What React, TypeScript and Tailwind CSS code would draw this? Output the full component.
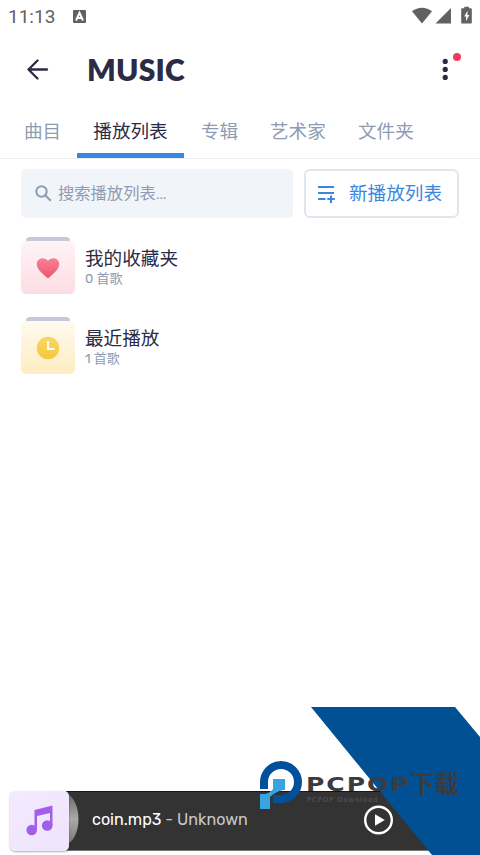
import type { ReactNode } from "react";
import clsx from "clsx";

const tabs = [
  { label: "曲目", className: "w-[53px]" },
  { label: "播放列表", className: "w-[107px]" },
  { label: "专辑", className: "w-[69px]" },
  { label: "艺术家", className: "w-[88px]" },
  { label: "文件夹", className: "w-[87px]" },
];

function StatusBar() {
  return (
    <div className="flex h-8 items-center px-2 text-[#616161]">
      <span className="w-[65px] pt-px font-[Roboto] text-[19px] leading-8">11:13</span>
      <svg width="13" height="13" viewBox="0 0 13 13">
        <rect width="13" height="13" rx="1" fill="#616161" />
        <path d="M3 10.5 6.5 2.8 10 10.5M4.4 8h4.2" fill="none" stroke="#fff" strokeWidth="2" />
      </svg>
      <svg width="60" height="20" viewBox="0 0 60 20" className="ml-auto" fill="#616161">
        <path d="M0 5.3C6 .6 14 .6 20 5.3L10 17.5Z" />
        <path d="M23.5 17.5H39V2Z" />
        <path d="M50 2.3h2.3V.8h4.6v1.5H59a.8.8 0 0 1 .8.8v13.6a.8.8 0 0 1-.8.8h-9a.8.8 0 0 1-.8-.8V3.1a.8.8 0 0 1 .8-.8Z" />
        <path d="m55.6 4.8-3.4 5.7h1.9v4.7l3.2-6.1h-1.9Z" fill="#fff" />
      </svg>
    </div>
  );
}

function Header() {
  return (
    <header className="flex h-[74px] items-center pl-[27px] text-[#2c2b45]">
      <svg
        width="22"
        height="22"
        viewBox="0 0 22 22"
        fill="none"
        stroke="currentColor"
        strokeWidth="2.3"
        strokeLinecap="round"
        strokeLinejoin="round"
      >
        <path d="M20 11.5H1.5M10.5 2.5l-9 9 9 9" />
      </svg>
      <h1 className="-mt-px ml-[38px] font-[Lato] text-[30px] font-extrabold leading-10 tracking-[0.2px]">
        MUSIC
      </h1>
      <div className="relative ml-auto mr-[32px]">
        <svg width="6" height="22" viewBox="0 0 6 22" fill="currentColor">
          <circle cx="3.2" cy="3.4" r="2.6" />
          <circle cx="3.2" cy="11.4" r="2.6" />
          <circle cx="3.2" cy="19.4" r="2.6" />
        </svg>
        <span className="absolute -top-[5px] left-[11px] size-2 rounded-full bg-[#f03d59]" />
      </div>
    </header>
  );
}

function Tabs() {
  return (
    <nav className="flex h-[53px] border-b border-[#eaecef] pl-[24px] text-[18.6px]">
      {tabs.map(({ label, className }, index) => (
        <div
          key={label}
          className={clsx(
            "flex flex-col whitespace-nowrap",
            className,
            index === 1 ? "items-center text-[#2c2b45]" : "text-[#8f9bb3]",
            index > 1 && "pl-[17px]"
          )}
        >
          <span className="h-[47px] leading-[53px]">{label}</span>
          {index === 1 && <span className="h-[5px] w-full bg-[#3b87e0]" />}
        </div>
      ))}
    </nav>
  );
}

function PlaylistRow({
  title,
  count,
  tone,
  children,
}: {
  title: string;
  count: string;
  tone: string;
  children: ReactNode;
}) {
  return (
    <li className="flex h-[80px]">
      <div className="w-[54px]">
        <div className="mx-auto h-[4px] w-[44px] rounded-t-[4px] bg-[#c5c9dc]" />
        <div className={clsx("flex h-[53px] items-center justify-center rounded-[5px] bg-linear-to-b", tone)}>
          {children}
        </div>
      </div>
      <div className="ml-[10px] pt-[8px]">
        <div className="text-[18.6px] leading-[28px] text-[#2c2b45]">{title}</div>
        <div className="-mt-px font-[Rubik,'Noto_Sans_CJK_SC',sans-serif] text-[13px] leading-[14px] text-[#8f9bb3]">
          {count}
        </div>
      </div>
    </li>
  );
}

function Player() {
  return (
    <footer className="mb-[4px] ml-[10px] mt-auto flex h-[61px] items-center">
      <div className="z-10 flex h-[60px] w-[59px] items-center justify-center rounded-[5px] bg-linear-to-br from-[#f5e9fd] to-[#ede5fe] shadow-[0_1px_2px_#00000050]">
        <svg width="27" height="31" viewBox="0 0 27 31" fill="#a25eea">
          <path d="M8.5 5 26.5 .5v20H24V8L11 11v14H8.5Z" />
          <circle cx="5.7" cy="25" r="5.3" />
          <circle cx="21.2" cy="20.5" r="5.3" />
        </svg>
      </div>
      <div className="-ml-[3px] flex h-[60px] flex-1 items-center border-b border-t border-b-[#777] border-t-[#161616] bg-[#333] font-[Rubik,Inter] text-white">
        <svg width="13" height="52" viewBox="0 0 13 52" className="-mt-1">
          <defs>
            <linearGradient id="disc" x2="0" y2="1">
              <stop stopColor="#666" />
              <stop offset=".5" stopColor="#aaa" />
              <stop offset="1" stopColor="#777" />
            </linearGradient>
          </defs>
          <path d="M0 0C7 3 12.5 13 12.5 26S7 49 0 52Z" fill="url(#disc)" />
        </svg>
        <span className="ml-[13px] w-[272px] whitespace-nowrap text-[16.1px]">
          coin.mp3 <span className="text-[#c8c8c8]">- Unknown</span>
        </span>
        <svg width="30" height="30" viewBox="0 0 30 30" className="-mt-px">
          <circle cx="14.5" cy="15" r="13.3" fill="none" stroke="#fff" strokeWidth="2.4" />
          <path d="M11 9.3v11.4l9.8-5.7Z" fill="#fff" />
        </svg>
      </div>
    </footer>
  );
}

function Watermark() {
  return (
    <div className="absolute bottom-0 right-0 z-20 h-[148px] w-[222px]">
      <svg width="222" height="148" viewBox="0 0 222 148">
        <path d="M53 0h144l25 30v118h-48Z" fill="#005093" />
        <path d="M6 82V75A17 17 0 1 1 23 92H15" fill="none" stroke="#00509b" strokeWidth="8" />
        <path d="M15 72h12v11h-2q-8 2-13 7v12H2V87h4q5 0 9-5Z" fill="#38a4e2" />
      </svg>
      <div className="absolute left-[48px] top-[61px] flex items-center whitespace-nowrap font-bold leading-[32px] text-[#3a3c40]">
        <span className="w-[104px]">
          <span className="inline-block origin-left scale-x-125 font-['DejaVu_Sans'] text-[20px] tracking-[1.6px]">
            PCPOP
          </span>
        </span>
        <span className="text-[24.5px]">下载</span>
      </div>
      <div className="absolute left-[49px] top-[88px] whitespace-nowrap font-['DejaVu_Sans'] text-[7px] leading-[10px] tracking-[0.8px] text-[#55585c]">
        PCPOP Download
      </div>
    </div>
  );
}

export default function App() {
  return (
    <div className="relative flex h-[855px] w-[480px] flex-col overflow-hidden bg-white font-[Roboto,'Noto_Sans_CJK_SC',sans-serif]">
      <StatusBar />
      <Header />
      <Tabs />
      <div className="flex px-[21px] pt-[10px]">
        <div className="flex h-[49px] w-[272px] items-center rounded-[5px] bg-[#f1f5fa] pl-[14px] text-[#8f9bb3]">
          <svg width="17" height="17" viewBox="0 0 17 17" fill="none" stroke="currentColor" strokeWidth="2">
            <circle cx="6.5" cy="6.5" r="5.2" />
            <path d="m10.2 10.2 5.6 5.6" />
          </svg>
          <span className="ml-[6px] pt-px text-[16.3px]">搜索播放列表…</span>
        </div>
        <button className="ml-[11px] flex h-[49px] w-[155px] items-center rounded-[6px] border-2 border-[#e1e6ee] pl-[12px] text-[#3b87e0]">
          <svg width="18" height="18" viewBox="0 0 18 18" fill="none" stroke="currentColor" strokeWidth="2">
            <path d="M0 2h16M0 8h16M0 14h7.5M13 10.5v7.5M9.3 14h7.5" />
          </svg>
          <span className="ml-[13px] whitespace-nowrap pt-[3px] text-[18.6px]">新播放列表</span>
        </button>
      </div>
      <ul className="pl-[21px] pt-[19px]">
        <PlaylistRow title="我的收藏夹" count="0 首歌" tone="from-[#fff4f6] to-[#fddde4]">
          <svg width="24" height="22" viewBox="0 0 24 22">
            <defs>
              <linearGradient id="heart" x2="0" y2="1">
                <stop stopColor="#f78298" />
                <stop offset="1" stopColor="#ee5470" />
              </linearGradient>
            </defs>
            <path
              d="M12 21.5C8 17.5.8 13 .8 7 .8 1 8.5-.8 12 3.8 15.5-.8 23.2 1 23.2 7c0 6-7.2 10.5-11.2 14.5Z"
              fill="url(#heart)"
            />
          </svg>
        </PlaylistRow>
        <PlaylistRow title="最近播放" count="1 首歌" tone="from-[#fffaf0] to-[#fdedc1]">
          <svg width="24" height="24" viewBox="0 0 24 24">
            <defs>
              <linearGradient id="clock" x2="0" y2="1">
                <stop stopColor="#f8d669" />
                <stop offset="1" stopColor="#f7c838" />
              </linearGradient>
            </defs>
            <circle cx="12" cy="12" r="11.2" fill="url(#clock)" />
            <path d="M12 5v8h6.5" fill="none" stroke="#fff" strokeWidth="1.8" />
          </svg>
        </PlaylistRow>
      </ul>
      <Player />
      <Watermark />
    </div>
  );
}
